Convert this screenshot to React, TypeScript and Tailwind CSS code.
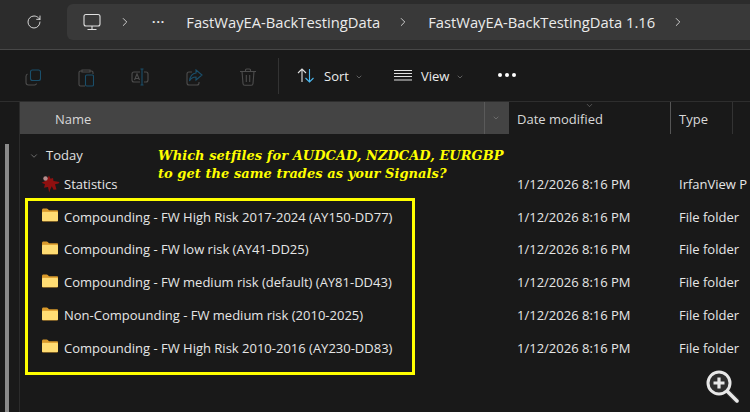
import { ChevronDown, ChevronRight, RotateCw } from 'lucide-react';

const rows = [
  'Compounding - FW High Risk 2017-2024 (AY150-DD77)',
  'Compounding - FW low risk (AY41-DD25)',
  'Compounding - FW medium risk (default) (AY81-DD43)',
  'Non-Compounding - FW medium risk (2010-2025)',
  'Compounding - FW High Risk 2010-2016 (AY230-DD83)',
];

function FolderIcon() {
  return (
    <svg width="16" height="14" viewBox="0 0 16 14" className="-mt-[4px] shrink-0">
      <path d="M0 2.5C0 1 .6.5 1.5.5h3.2c.5 0 .8.2 1.1.5L7 2.2h8c.6 0 1 .4 1 1V4H0z" fill="#d99a2b" />
      <rect x="0" y="3" width="16" height="10.5" rx="1" fill="#e0a437" />
      <rect x="0" y="4" width="16" height="9" rx="0.8" fill="#ffdc73" />
    </svg>
  );
}

function StatsIcon() {
  return (
    <svg width="20" height="19" viewBox="0 0 20 19" className="-ml-[1px] -mr-[3px] -mt-[3px] shrink-0">
      <path d="M8 1.5l1.5 3.2L12 4l.5 3 6 1-1 1.6-3.5.6 1.5 5.3-3 .2-1.7-3.4L9 16l-.8 2.5L7 13l-4 .8 1-3.6-3.5-1.5 4.5-2z" fill="#8f1010" />
      <circle cx="4.5" cy="4.5" r="2.2" fill="#b58c8c" />
    </svg>
  );
}

function Row({ name, icon }: { name: string; icon: React.ReactNode }) {
  return (
    <div className="flex h-[32.75px] items-center text-[13px] text-[#e6e6e6]">
      <div className="flex w-[497px] items-center gap-[6px] pl-[22px]">
        {icon}
        <span className="whitespace-nowrap">{name}</span>
      </div>
      <div className="w-[162px] whitespace-nowrap">1/12/2026 8:16 PM</div>
      <div className="whitespace-nowrap">{name === 'Statistics' ? 'IrfanView P' : 'File folder'}</div>
    </div>
  );
}

export default function App() {
  return (
    <div
      className="relative h-[412px] w-[750px] overflow-hidden bg-[#191919]"
      style={{ fontFamily: '"Open Sans", "Noto Sans", sans-serif' }}
    >
      {/* address bar */}
      <div className="flex h-[50px] items-start border-b border-[#484848] bg-[#2c2c2c] pt-1">
        <div className="flex h-[36px] w-[67px] items-center pl-[26px]">
          <RotateCw size={16} strokeWidth={1.3} className="text-[#ededed]" />
        </div>
        <div className="flex h-[36px] flex-1 items-center rounded-l-md bg-[#393939] pl-[16px] text-[14.75px] leading-none text-[#ebebeb]">
          <svg width="18" height="18" viewBox="0 0 18 18" fill="none" stroke="#e0e0e0" strokeWidth="1.1">
            <rect x="1" y="1.5" width="16" height="11.5" rx="2" />
            <path d="M9 13v3M4.5 16.5h9" />
          </svg>
          <ChevronRight size={14} strokeWidth={1.4} className="ml-[17px]" />
          <span className="ml-[20px] text-[12px] font-bold leading-none tracking-[1px]">···</span>
          <span className="ml-[21px] whitespace-nowrap">FastWayEA-BackTestingData</span>
          <ChevronRight size={14} strokeWidth={1.4} className="ml-[16px]" />
          <span className="ml-[18px] whitespace-nowrap">FastWayEA-BackTestingData 1.16</span>
          <ChevronRight size={14} strokeWidth={1.4} className="ml-[16px]" />
        </div>
      </div>

      {/* toolbar */}
      <div className="flex h-[52px] items-center border-b border-[#2e2e2e] pl-[25px] pt-[3px] text-[13px] text-[#ececec]">
        <div className="flex w-[253px] items-center gap-[37px]">
          <svg width="16" height="17" viewBox="0 0 16 17" fill="none" strokeWidth="1.1">
            <rect x="5.5" y="1" width="10" height="10.5" rx="2" stroke="#1a4f6b" />
            <path d="M2.5 5C1.3 5.5 1 6.3 1 7.5v6c0 1.5 1 2.5 2.5 2.5h6c1 0 1.8-.5 2-1.5" stroke="#4d4d4d" />
          </svg>
          <svg width="16" height="19" viewBox="0 0 16 19" fill="none" strokeWidth="1.1">
            <path d="M4 3H2.5C1.5 3 1 3.7 1 4.5v12c0 1 .6 1.5 1.5 1.5H7M12 3h1.5c1 0 1.5.7 1.5 1.5V6M4 2h8v2H4z" stroke="#4d4d4d" />
            <rect x="7.5" y="7" width="8" height="11" rx="1.2" stroke="#1a4f6b" />
          </svg>
          <svg width="18" height="18" viewBox="0 0 18 18" fill="none" strokeWidth="1.1">
            <path d="M9 4H3C1.8 4 1 4.8 1 6v6c0 1.2.8 2 2 2h6M13 4h2c1 0 2 .8 2 2v6c0 1.2-1 2-2 2h-2" stroke="#4d4d4d" />
            <path d="M3.5 12L6 6l2.5 6M4.3 10.5h3.4" stroke="#4d4d4d" />
            <path d="M11 1v16M9.5 1h3M9.5 17h3" stroke="#1a4f6b" />
          </svg>
          <svg width="17" height="17" viewBox="0 0 17 17" fill="none" strokeWidth="1.1">
            <path d="M6 3H3C1.8 3 1 3.8 1 5v9c0 1.2.8 2 2 2h8c1.2 0 2-.8 2-2v-1" stroke="#4d4d4d" />
            <path d="M10 1l6 5-6 5V8C7 8 5 9 3.5 12 4 7.5 6 4.5 10 4z" stroke="#1a4f6b" />
          </svg>
          <svg width="16" height="18" viewBox="0 0 16 18" fill="none" stroke="#4d4d4d" strokeWidth="1.1">
            <path d="M0 3.5h16M5.5 3.5V2c0-.6.4-1 1-1h3c.6 0 1 .4 1 1v1.5M2 3.5l1 12c0 1 .7 1.8 1.8 1.8h6.4c1.1 0 1.8-.8 1.8-1.8l1-12M6.3 7v7M9.7 7v7" />
          </svg>
        </div>
        <div className="-mt-[3px] h-[36px] w-px bg-[#333333]" />
        <svg width="19" height="15" viewBox="0 0 19 15" fill="none" strokeWidth="1.1" className="-mt-[3px] ml-[18px]">
          <path d="M5 14V1M1 5l4-4 4 4" stroke="#e0e0e0" />
          <path d="M12.5 1v13M8.5 10l4 4 4-4" stroke="#4cb8f0" />
        </svg>
        <span className="ml-[8px]">Sort</span>
        <ChevronDown size={8} strokeWidth={1.4} className="ml-[6px] text-[#b0b0b0]" />
        <svg width="18" height="11" viewBox="0 0 18 11" stroke="#e0e0e0" strokeWidth="1" className="-mt-[3px] ml-[31px]">
          <path d="M0 .5h18M0 3.5h18M0 6.5h18M0 10h18" />
        </svg>
        <span className="ml-[9px]">View</span>
        <ChevronDown size={8} strokeWidth={1.4} className="ml-[7px] text-[#b0b0b0]" />
        <div className="-mt-[5px] ml-[34px] flex gap-[3px]">
          <div className="h-[4px] w-[4px] rounded-full bg-white" />
          <div className="h-[4px] w-[4px] rounded-full bg-white" />
          <div className="h-[4px] w-[4px] rounded-full bg-white" />
        </div>
      </div>

      <div className="flex h-[310px]">
        {/* scrollbar strip */}
        <div className="w-[20px] shrink-0 border-r border-[#2b2b2b] pl-[5px] pt-[42px]">
          <div className="h-full w-[4px] bg-[#8a8a8a]" />
        </div>

        <div className="flex-1">
          {/* column headers */}
          <div className="flex h-[32px] text-[13px] text-[#d8d8d8]">
            <div className="flex w-[489px] items-center justify-between bg-[#444444] pl-[35px] pr-[9px] pt-[3px]">
              <span>Name</span>
              <div className="-mt-[3px] flex h-[32px] w-[16px] items-center justify-end border-l border-[#5a5a5a]">
                <ChevronDown size={8} strokeWidth={1.4} className="text-[#9a9a9a]" />
              </div>
            </div>
            <div className="relative flex w-[162px] items-center border-r border-[#555555] pl-[8px] pt-[3px]">
              <span>Date modified</span>
              <ChevronDown size={9} strokeWidth={1.2} className="absolute left-[76px] top-[-1px] text-[#9a9a9a]" />
            </div>
            <div className="flex w-[62px] items-center border-r border-[#333333] pl-[8px] pt-[3px]">Type</div>
          </div>

          <div className="flex h-[36px] items-center gap-[7px] pl-[9px] pt-[8px] text-[13px] text-[#e0e0e0]">
            <ChevronDown size={10} strokeWidth={1.2} className="text-[#bdbdbd]" />
            <span>Today</span>
          </div>
          <div className="flex h-[28px] items-center pt-[2px]">
            <Row name="Statistics" icon={<StatsIcon />} />
          </div>

          {/* yellow highlight around the folder rows */}
          <div className="ml-[5px] w-[390px] border-[3px] border-[#ffff00] pb-[7px]">
            <div className="-ml-[8px] -mr-[400px]">
              {rows.map((name) => (
                <Row key={name} name={name} icon={<FolderIcon />} />
              ))}
            </div>
          </div>
        </div>
      </div>

      {/* annotation over the list */}
      <div
        className="absolute left-[158px] top-[147px] text-[13px] font-bold italic leading-[18px] tracking-[0.05px] text-[#ffff00]"
        style={{ fontFamily: '"DejaVu Serif", serif' }}
      >
        <div>Which setfiles for AUDCAD, NZDCAD, EURGBP</div>
        <div>to get the same trades as your Signals?</div>
      </div>

      {/* zoom badge */}
      <svg width="34" height="34" viewBox="0 0 34 34" fill="none" className="absolute left-[705px] top-[369px]">
        <path d="M22 22l10 10" stroke="#2b2b2b" strokeWidth="6" strokeLinecap="round" />
        <path d="M22 22l10 10" stroke="#e8e8e8" strokeWidth="3.5" strokeLinecap="round" />
        <circle cx="14" cy="14" r="11" fill="#2e2e2e" stroke="#e8e8e8" strokeWidth="3" />
        <path d="M14 8.5v11M8.5 14h11" stroke="#e8e8e8" strokeWidth="3.2" />
      </svg>
    </div>
  );
}
